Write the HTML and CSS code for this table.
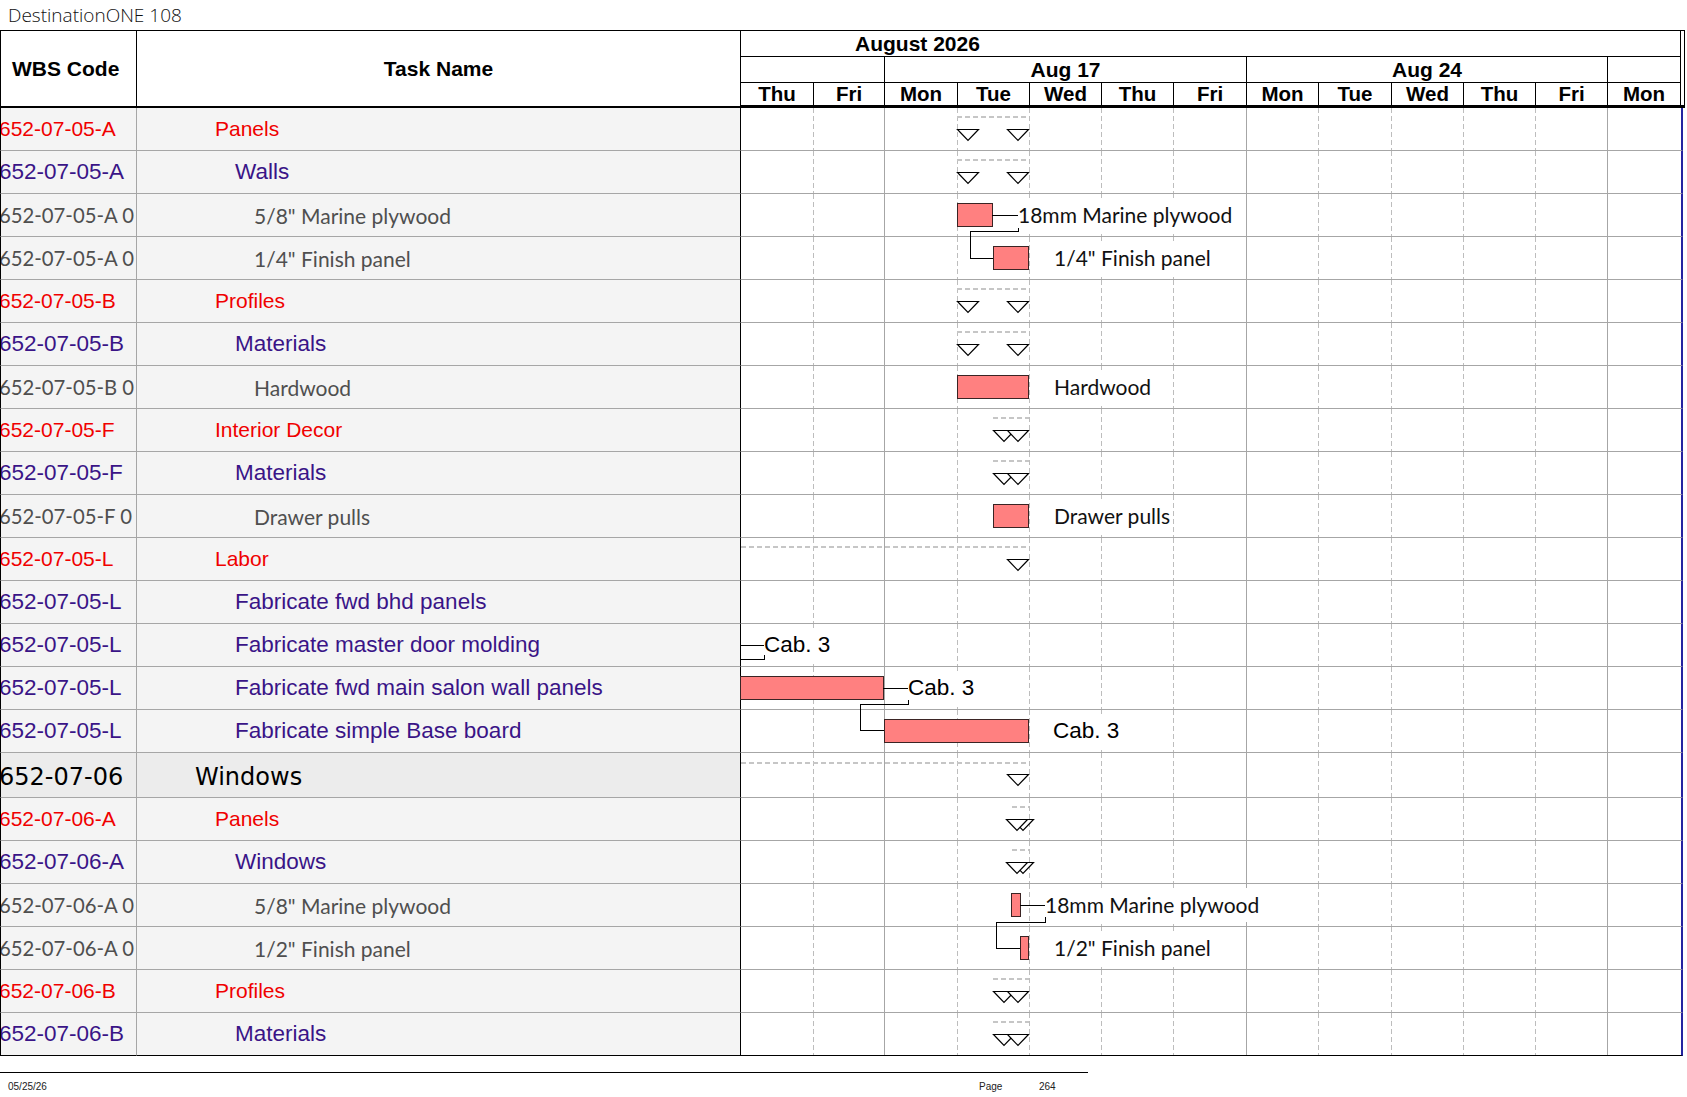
FILE: index.html
```html
<!DOCTYPE html>
<html lang="en">
<head>
<meta charset="utf-8">
<title>DestinationONE 108</title>
<link rel="stylesheet" href="styles.css">
</head>
<body>
<div class="title">DestinationONE 108</div>
<div class="sheet">
  <div class="head">
    <div class="h-wbs">WBS Code</div>
    <div class="h-task">Task Name</div>
    <div class="h-gantt">
      <div class="h-month">August 2026</div>
      <div class="h-weeks">
        <div class="wk span2"></div>
        <div class="wk span5">Aug 17</div>
        <div class="wk span5">Aug 24</div>
        <div class="wk"></div>
      </div>
      <div class="h-days">
        <div>Thu</div><div>Fri</div><div>Mon</div><div>Tue</div><div>Wed</div><div>Thu</div><div>Fri</div><div>Mon</div><div>Tue</div><div>Wed</div><div>Thu</div><div>Fri</div><div>Mon</div>
      </div>
    </div>
  </div>

  <div class="row lv2">
    <div class="wbs">652-07-05-A</div><div class="task">Panels</div>
    <div class="gc">
      <div class="sum" style="left:216px;width:72px"></div>
      <svg class="tri" style="left:216px" viewBox="0 0 22 12"><polygon points="0.5,0.5 21.5,0.5 11,11.5"/></svg>
      <svg class="tri" style="left:266px" viewBox="0 0 22 12"><polygon points="0.5,0.5 21.5,0.5 11,11.5"/></svg>
    </div>
  </div>
  <div class="row lv3">
    <div class="wbs">652-07-05-A</div><div class="task">Walls</div>
    <div class="gc">
      <div class="sum" style="left:216px;width:72px"></div>
      <svg class="tri" style="left:216px" viewBox="0 0 22 12"><polygon points="0.5,0.5 21.5,0.5 11,11.5"/></svg>
      <svg class="tri" style="left:266px" viewBox="0 0 22 12"><polygon points="0.5,0.5 21.5,0.5 11,11.5"/></svg>
    </div>
  </div>
  <div class="row lv4">
    <div class="wbs">652-07-05-A 0</div><div class="task">5/8" Marine plywood</div>
    <div class="gc">
      <div class="bar" style="left:216px;width:36px"></div>
      <div class="lbl" style="left:277px">18mm Marine plywood</div>
      <svg class="link"><path d="M251 21.5H277M277.5 34V37.5H229.5V64.5H252"/></svg>
    </div>
  </div>
  <div class="row lv4">
    <div class="wbs">652-07-05-A 0</div><div class="task">1/4" Finish panel</div>
    <div class="gc">
      <div class="bar" style="left:252px;width:36px"></div>
      <div class="lbl" style="left:313px">1/4" Finish panel</div>
    </div>
  </div>
  <div class="row lv2">
    <div class="wbs">652-07-05-B</div><div class="task">Profiles</div>
    <div class="gc">
      <div class="sum" style="left:216px;width:72px"></div>
      <svg class="tri" style="left:216px" viewBox="0 0 22 12"><polygon points="0.5,0.5 21.5,0.5 11,11.5"/></svg>
      <svg class="tri" style="left:266px" viewBox="0 0 22 12"><polygon points="0.5,0.5 21.5,0.5 11,11.5"/></svg>
    </div>
  </div>
  <div class="row lv3">
    <div class="wbs">652-07-05-B</div><div class="task">Materials</div>
    <div class="gc">
      <div class="sum" style="left:216px;width:72px"></div>
      <svg class="tri" style="left:216px" viewBox="0 0 22 12"><polygon points="0.5,0.5 21.5,0.5 11,11.5"/></svg>
      <svg class="tri" style="left:266px" viewBox="0 0 22 12"><polygon points="0.5,0.5 21.5,0.5 11,11.5"/></svg>
    </div>
  </div>
  <div class="row lv4">
    <div class="wbs">652-07-05-B 0</div><div class="task">Hardwood</div>
    <div class="gc">
      <div class="bar" style="left:216px;width:72px"></div>
      <div class="lbl" style="left:313px">Hardwood</div>
    </div>
  </div>
  <div class="row lv2">
    <div class="wbs">652-07-05-F</div><div class="task">Interior Decor</div>
    <div class="gc">
      <div class="sum" style="left:252px;width:36px"></div>
      <svg class="tri" style="left:252px" viewBox="0 0 22 12"><polygon points="0.5,0.5 21.5,0.5 11,11.5"/></svg>
      <svg class="tri" style="left:266px" viewBox="0 0 22 12"><polygon points="0.5,0.5 21.5,0.5 11,11.5"/></svg>
    </div>
  </div>
  <div class="row lv3">
    <div class="wbs">652-07-05-F</div><div class="task">Materials</div>
    <div class="gc">
      <div class="sum" style="left:252px;width:36px"></div>
      <svg class="tri" style="left:252px" viewBox="0 0 22 12"><polygon points="0.5,0.5 21.5,0.5 11,11.5"/></svg>
      <svg class="tri" style="left:266px" viewBox="0 0 22 12"><polygon points="0.5,0.5 21.5,0.5 11,11.5"/></svg>
    </div>
  </div>
  <div class="row lv4">
    <div class="wbs">652-07-05-F 0</div><div class="task">Drawer pulls</div>
    <div class="gc">
      <div class="bar" style="left:252px;width:36px"></div>
      <div class="lbl" style="left:313px">Drawer pulls</div>
    </div>
  </div>
  <div class="row lv2">
    <div class="wbs">652-07-05-L</div><div class="task">Labor</div>
    <div class="gc">
      <div class="sum" style="left:0;width:288px"></div>
      <svg class="tri" style="left:266px" viewBox="0 0 22 12"><polygon points="0.5,0.5 21.5,0.5 11,11.5"/></svg>
    </div>
  </div>
  <div class="row lv3">
    <div class="wbs">652-07-05-L</div><div class="task">Fabricate fwd bhd panels</div>
    <div class="gc"></div>
  </div>
  <div class="row lv3">
    <div class="wbs">652-07-05-L</div><div class="task">Fabricate master door molding</div>
    <div class="gc">
      <div class="lbl arial" style="left:23px">Cab. 3</div>
      <svg class="link"><path d="M0 21.5H23M23.5 31V35.5H0"/></svg>
    </div>
  </div>
  <div class="row lv3">
    <div class="wbs">652-07-05-L</div><div class="task">Fabricate fwd main salon wall panels</div>
    <div class="gc">
      <div class="bar" style="left:-1px;width:144px"></div>
      <div class="lbl arial" style="left:167px">Cab. 3</div>
      <svg class="link"><path d="M142 21.5H167M167.5 33V37.5H119.5V63.5H143"/></svg>
    </div>
  </div>
  <div class="row lv3">
    <div class="wbs">652-07-05-L</div><div class="task">Fabricate simple Base board</div>
    <div class="gc">
      <div class="bar" style="left:143px;width:145px"></div>
      <div class="lbl arial" style="left:312px">Cab. 3</div>
    </div>
  </div>
  <div class="row lv1">
    <div class="wbs">652-07-06</div><div class="task">Windows</div>
    <div class="gc">
      <div class="sum" style="left:0;width:288px"></div>
      <svg class="tri" style="left:266px" viewBox="0 0 22 12"><polygon points="0.5,0.5 21.5,0.5 11,11.5"/></svg>
    </div>
  </div>
  <div class="row lv2">
    <div class="wbs">652-07-06-A</div><div class="task">Panels</div>
    <div class="gc">
      <div class="sum" style="left:271px;width:17px"></div>
      <svg class="tri" style="left:271px" viewBox="0 0 22 12"><polygon points="0.5,0.5 21.5,0.5 11,11.5"/></svg>
      <svg class="tri" style="left:265px" viewBox="0 0 22 12"><polygon points="0.5,0.5 21.5,0.5 11,11.5"/></svg>
    </div>
  </div>
  <div class="row lv3">
    <div class="wbs">652-07-06-A</div><div class="task">Windows</div>
    <div class="gc">
      <div class="sum" style="left:271px;width:17px"></div>
      <svg class="tri" style="left:271px" viewBox="0 0 22 12"><polygon points="0.5,0.5 21.5,0.5 11,11.5"/></svg>
      <svg class="tri" style="left:265px" viewBox="0 0 22 12"><polygon points="0.5,0.5 21.5,0.5 11,11.5"/></svg>
    </div>
  </div>
  <div class="row lv4">
    <div class="wbs">652-07-06-A 0</div><div class="task">5/8" Marine plywood</div>
    <div class="gc">
      <div class="bar" style="left:270px;width:10px"></div>
      <div class="lbl" style="left:304px">18mm Marine plywood</div>
      <svg class="link"><path d="M279 21.5H304M304.5 33V38.5H255.5V64.5H279"/></svg>
    </div>
  </div>
  <div class="row lv4">
    <div class="wbs">652-07-06-A 0</div><div class="task">1/2" Finish panel</div>
    <div class="gc">
      <div class="bar" style="left:279px;width:9px"></div>
      <div class="lbl" style="left:313px">1/2" Finish panel</div>
    </div>
  </div>
  <div class="row lv2">
    <div class="wbs">652-07-06-B</div><div class="task">Profiles</div>
    <div class="gc">
      <div class="sum" style="left:252px;width:36px"></div>
      <svg class="tri" style="left:252px" viewBox="0 0 22 12"><polygon points="0.5,0.5 21.5,0.5 11,11.5"/></svg>
      <svg class="tri" style="left:266px" viewBox="0 0 22 12"><polygon points="0.5,0.5 21.5,0.5 11,11.5"/></svg>
    </div>
  </div>
  <div class="row lv3 last">
    <div class="wbs">652-07-06-B</div><div class="task">Materials</div>
    <div class="gc">
      <div class="sum" style="left:252px;width:36px"></div>
      <svg class="tri" style="left:252px" viewBox="0 0 22 12"><polygon points="0.5,0.5 21.5,0.5 11,11.5"/></svg>
      <svg class="tri" style="left:266px" viewBox="0 0 22 12"><polygon points="0.5,0.5 21.5,0.5 11,11.5"/></svg>
    </div>
  </div>
</div>
<div class="footer">
  <span>05/25/26</span><span>Page</span><span>264</span>
</div>
</body>
</html>
```

FILE: styles.css
```css
html, body {
  margin: 0;
  padding: 0;
  background: #fff;
}
body {
  width: 1687px;
  font-family: "Liberation Sans", Arial, sans-serif;
  color: #000;
}
.title {
  height: 30px;
  line-height: 30px;
  padding-left: 8px;
  font-family: "Open Sans", sans-serif;
  font-weight: 300;
  font-size: 19px;
  color: #111;
  white-space: nowrap;
}
.sheet {
  width: 1685px;
}

/* ---------- header ---------- */
.head {
  display: flex;
  border-top: 1px solid #000;
  height: 77px;
}
.h-wbs, .h-task {
  box-sizing: border-box;
  height: 77px;
  display: flex;
  align-items: center;
  font-weight: bold;
  font-size: 21px;
  border-bottom: 2px solid #000;
  border-right: 1px solid #000;
}
.h-wbs {
  width: 137px;
  border-left: 1px solid #000;
  padding-left: 11px;
}
.h-task {
  width: 604px;
  justify-content: center;
}
.h-gantt {
  box-sizing: border-box;
  width: 944px;
  padding-right: 3px;
  border-right: 1px solid #000;
  border-bottom: 3px solid #000;
  display: grid;
  grid-template-rows: 26px 26px 22px;
  font-weight: bold;
}
.h-month {
  border-bottom: 1px solid #000;
  border-right: 1px solid #000;
  padding-left: 114px;
  font-size: 21px;
  line-height: 25px;
  white-space: nowrap;
}
.h-weeks, .h-days {
  display: grid;
  grid-template-columns: 73px 71px 73px 72px 72px 72px 73px 72px 73px 72px 72px 72px 73px;
}
.wk {
  box-sizing: border-box;
  border-right: 1px solid #000;
  border-bottom: 1px solid #000;
  text-align: center;
  font-size: 21px;
  line-height: 25px;
}
.span2 { grid-column: span 2; }
.span5 { grid-column: span 5; }
.h-days > div {
  box-sizing: border-box;
  border-right: 1px solid #000;
  text-align: center;
  font-size: 20.5px;
  line-height: 22px;
}

/* ---------- body rows ---------- */
.row {
  display: flex;
  height: 43px;
}
.row.lv1 { height: 45px; }
.wbs, .task {
  box-sizing: border-box;
  background: #f4f4f4;
  border-bottom: 1px solid #a6a6a6;
  display: flex;
  align-items: center;
  white-space: nowrap;
  overflow: hidden;
}
.wbs {
  width: 137px;
  border-left: 1px solid #000;
  border-right: 1px solid #a6a6a6;
  text-indent: -2px;
}
.task {
  width: 604px;
  border-right: 1px solid #000;
}
.gc {
  box-sizing: border-box;
  width: 942px;
  position: relative;
  border-right: 2px solid #2424a0;
  border-bottom: 1px solid #a6a6a6;
  background-color: #fff;
  background-image:
    linear-gradient(to right, transparent 143px, #a6a6a6 143px 144px, transparent 144px 505px, #a6a6a6 505px 506px, transparent 506px 866px, #a6a6a6 866px 867px, transparent 867px),
    repeating-linear-gradient(to bottom, transparent 0 5px, #fff 5px 8px),
    linear-gradient(to right, transparent 72px, #bdbdbd 72px 73px, transparent 73px 216px, #bdbdbd 216px 217px, transparent 217px 288px, #bdbdbd 288px 289px, transparent 289px 360px, #bdbdbd 360px 361px, transparent 361px 432px, #bdbdbd 432px 433px, transparent 433px 577px, #bdbdbd 577px 578px, transparent 578px 650px, #bdbdbd 650px 651px, transparent 651px 722px, #bdbdbd 722px 723px, transparent 723px 794px, #bdbdbd 794px 795px, transparent 795px);
}
.row.last > div { border-bottom-color: #000; }

/* text styles by outline level */
.lv1 .wbs, .lv1 .task {
  background: #ececec;
  font-family: "DejaVu Sans", sans-serif;
  font-size: 24px;
  color: #000;
}
.lv1 .wbs { padding-top: 3px; }
.lv1 .task { padding-left: 58px; padding-top: 3px; }
.lv2 .wbs, .lv2 .task {
  font-size: 21px;
  color: #f00000;
}
.lv2 .task { padding-left: 78px; }
.lv3 .wbs, .lv3 .task {
  font-size: 22.5px;
  color: #3a1487;
}
.lv3 .task { padding-left: 98px; }
.lv4 .wbs, .lv4 .task {
  font-family: Lato, "Liberation Sans", sans-serif;
  font-size: 21px;
  color: #4f4f4f;
}
.lv4 .wbs { font-size: 20.3px; }
.lv4 .task { padding-left: 117px; }

/* ---------- gantt marks ---------- */
.sum {
  position: absolute;
  top: 8px;
  height: 2px;
  background: repeating-linear-gradient(to right, #c6c6c6 0 5px, transparent 5px 8px);
}
.lv1 .sum { top: 9px; }
.tri {
  position: absolute;
  top: 21px;
  width: 22px;
  height: 12px;
  overflow: visible;
}
.tri polygon {
  fill: #fff;
  stroke: #000;
  stroke-width: 1.2;
}
.bar {
  position: absolute;
  top: 9px;
  height: 24px;
  box-sizing: border-box;
  background: #ff8080;
  border: 1px solid #3a2424;
}
.lbl {
  position: absolute;
  top: 4px;
  height: 34px;
  line-height: 34px;
  background: #fff;
  white-space: nowrap;
  font-family: Lato, "Liberation Sans", sans-serif;
  font-size: 21px;
  color: #111;
}
.lbl.arial {
  font-family: "Liberation Sans", Arial, sans-serif;
  font-size: 22.5px;
  color: #000;
}
.link {
  position: absolute;
  left: 0;
  top: 0;
  width: 1px;
  height: 1px;
  overflow: visible;
  z-index: 1;
}
.link path {
  fill: none;
  stroke: #000;
  stroke-width: 1;
  shape-rendering: crispEdges;
}

/* ---------- footer ---------- */
.footer {
  width: 1088px;
  margin-top: 16px;
  border-top: 1px solid #000;
  padding-top: 8px;
  padding-left: 8px;
  box-sizing: border-box;
  display: grid;
  grid-template-columns: 971px 60px auto;
  font-family: "Liberation Sans Narrow", "Liberation Sans", sans-serif;
  font-size: 10px;
  line-height: 12px;
  color: #222;
}
```
